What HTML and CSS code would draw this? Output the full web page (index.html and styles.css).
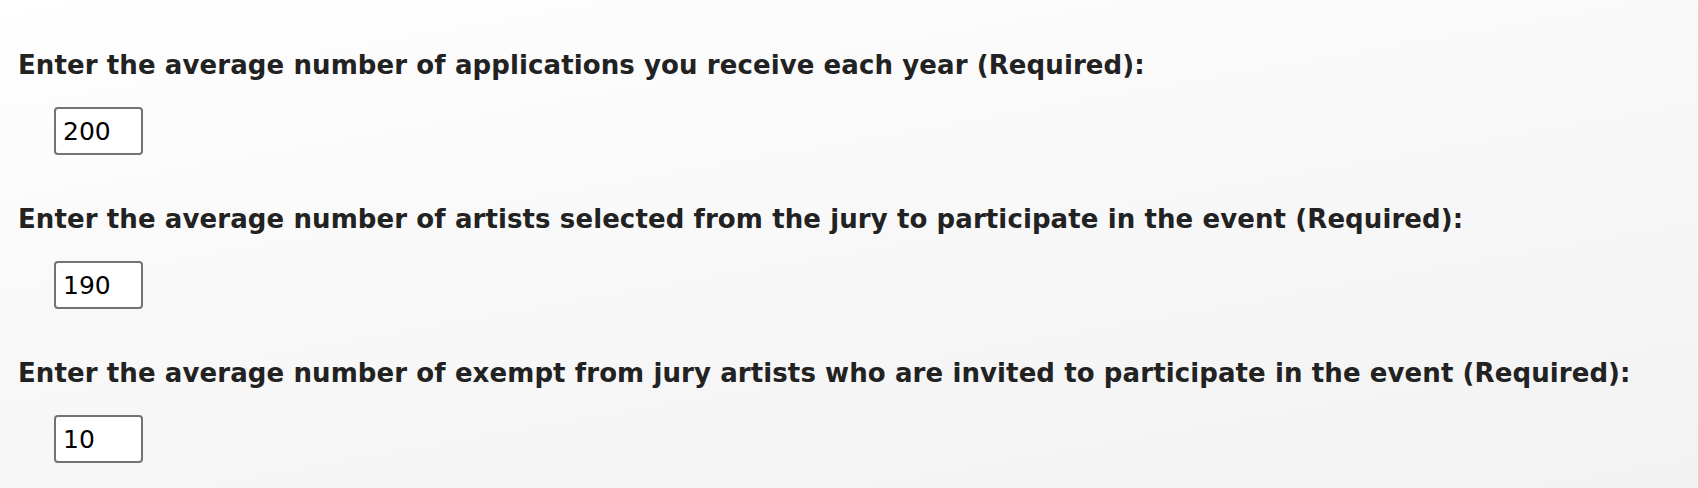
FILE: index.html
```html
<!DOCTYPE html>
<html lang="en">
<head>
<meta charset="utf-8">
<title>Form</title>
<link rel="stylesheet" href="styles.css">
</head>
<body>
<form class="form">
  <div class="field">
    <label class="label" for="apps">Enter the average number of applications you receive each year (Required):</label>
    <div class="control"><input class="num" id="apps" type="text" value="200"></div>
  </div>
  <div class="field">
    <label class="label" for="sel">Enter the average number of artists selected from the jury to participate in the event (Required):</label>
    <div class="control"><input class="num" id="sel" type="text" value="190"></div>
  </div>
  <div class="field">
    <label class="label" for="ex">Enter the average number of exempt from jury artists who are invited to participate in the event (Required):</label>
    <div class="control"><input class="num" id="ex" type="text" value="10"></div>
  </div>
</form>
</body>
</html>
```

FILE: styles.css
```css
html, body {
  margin: 0;
  padding: 0;
  height: 100%;
}
body {
  background: linear-gradient(170deg, #ffffff 0%, #f9f9f9 40%, #f2f2f2 100%);
  font-family: "DejaVu Sans", Verdana, sans-serif;
  color: #222222;
}
.form {
  display: flex;
  flex-direction: column;
  gap: 50px;
  padding: 51px 0 0 18px;
}
.field {
  display: flex;
  flex-direction: column;
  gap: 28px;
}
.label {
  display: block;
  font-weight: bold;
  font-size: 26px;
  letter-spacing: 0.1px;
  line-height: 28px;
  color: #222222;
  white-space: nowrap;
}
.control {
  padding-left: 36px;
}
.num {
  box-sizing: border-box;
  width: 89px;
  height: 48px;
  margin: 0;
  padding: 0 0 0 7px;
  border: 2px solid #737373;
  border-radius: 4px;
  background: #ffffff;
  font-family: "DejaVu Sans", Verdana, sans-serif;
  font-size: 25px;
  color: #000000;
  outline: none;
}
```
